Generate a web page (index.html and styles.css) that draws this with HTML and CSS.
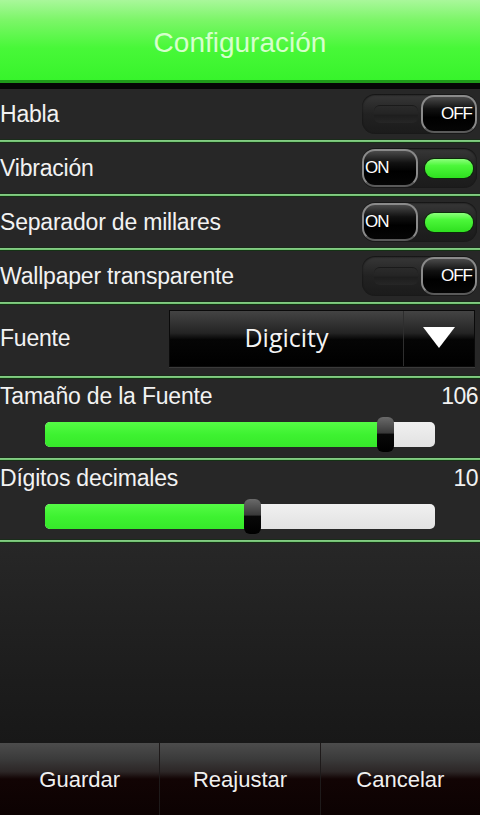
FILE: index.html
```html
<!DOCTYPE html>
<html lang="es">
<head>
<meta charset="utf-8">
<title>Configuración</title>
<link rel="stylesheet" href="styles.css">
</head>
<body>
<div class="app">
  <header class="header">Configuración</header>
  <main class="list">
    <div class="row first">
      <span class="label">Habla</span>
      <div class="toggle off"><span class="slot"></span><span class="knob">OFF</span></div>
    </div>
    <div class="sep"></div>
    <div class="row">
      <span class="label">Vibración</span>
      <div class="toggle on"><span class="knob">ON</span><span class="lamp"></span></div>
    </div>
    <div class="sep"></div>
    <div class="row">
      <span class="label">Separador de millares</span>
      <div class="toggle on"><span class="knob">ON</span><span class="lamp"></span></div>
    </div>
    <div class="sep"></div>
    <div class="row">
      <span class="label">Wallpaper transparente</span>
      <div class="toggle off"><span class="slot"></span><span class="knob">OFF</span></div>
    </div>
    <div class="sep"></div>
    <div class="row font-row">
      <span class="label">Fuente</span>
      <div class="dropdown">
        <span class="dd-value">Digicity</span>
        <span class="dd-arrow"><svg width="32" height="21" viewBox="0 0 32 21"><polygon points="0,0 32,0 16,21" fill="#fff"/></svg></span>
      </div>
    </div>
    <div class="sep"></div>
    <div class="slider-row">
      <div class="slider-head"><span class="label">Tamaño de la Fuente</span><span class="value">106</span></div>
      <div class="track"><div class="fill" style="width:333px"></div><div class="thumb" style="left:332px"></div></div>
    </div>
    <div class="sep"></div>
    <div class="slider-row">
      <div class="slider-head"><span class="label">Dígitos decimales</span><span class="value">10</span></div>
      <div class="track"><div class="fill" style="width:202px"></div><div class="thumb" style="left:199px"></div></div>
    </div>
    <div class="sep"></div>
    <div class="empty"></div>
  </main>
  <footer class="bar">
    <div class="btn">Guardar</div>
    <div class="btn">Reajustar</div>
    <div class="btn">Cancelar</div>
  </footer>
</div>
</body>
</html>
```

FILE: styles.css
```css
* { box-sizing: border-box; }
html, body { margin: 0; padding: 0; }
body {
  width: 480px;
  height: 815px;
  overflow: hidden;
  background: #262626;
  font-family: "Liberation Sans", Arial, sans-serif;
  color: #f2f2f2;
}
.app {
  display: flex;
  flex-direction: column;
  height: 815px;
}
.header {
  height: 83px;
  padding-top: 6px;
  display: flex;
  align-items: center;
  justify-content: center;
  font-size: 28px;
  color: #d6ffcc;
  background: linear-gradient(#a9f79b 0%, #7cf668 25%, #48f838 60%, #37f42b 100%);
  border-bottom: 3px solid #1f9a1a;
}
.list {
  flex: 1;
  display: flex;
  flex-direction: column;
  border-top: 6px solid #060606;
  background: #272727;
}
.row {
  height: 50px;
  display: flex;
  align-items: center;
  justify-content: space-between;
  padding-right: 3px;
}
.label {
  font-size: 23px;
  letter-spacing: -0.2px;
  color: #f2f2f2;
}
.sep {
  height: 4px;
  flex: none;
  background: linear-gradient(#1a2c1a 0, #1a2c1a 1px, #8ccf8c 1px, #6cbf6c 3px, #143214 3px);
}
.toggle {
  width: 115px;
  height: 40px;
  border-radius: 13px;
  display: flex;
  align-items: center;
  background: linear-gradient(#383838, #222 50%, #1b1b1b);
  box-shadow: inset 0 1px 2px rgba(0,0,0,0.8);
}
.toggle.off { justify-content: space-between; padding-left: 12px; }
.slot {
  width: 44px;
  height: 18px;
  border-radius: 6px;
  background: linear-gradient(#2b2b2b, #242424 45%, #1e1e1e 55%, #262626);
  border-top: 1px solid #1a1a1a;
}
.knob {
  width: 56px;
  height: 38px;
  border-radius: 13px;
  border: 2px solid #8a8a8a;
  border-bottom-color: #5a5a5a;
  background: linear-gradient(#4a4a4a 0%, #111 35%, #000 60%, #050505 100%);
  display: flex;
  align-items: center;
  font-size: 17px;
  letter-spacing: -1px;
  color: #fff;
}
.toggle.off .knob { justify-content: flex-end; padding-right: 3px; }
.toggle.on .knob { padding-left: 1px; }
.lamp {
  width: 48px;
  height: 19px;
  margin-left: 7px;
  border-radius: 9px;
  background: linear-gradient(#8cff7c 0%, #4cf73a 35%, #2ee01f 100%);
  box-shadow: 0 0 0 1px #0d2a0a;
}
.font-row {
  height: 70px;
  padding-top: 2px;
  padding-bottom: 6px;
  padding-right: 5px;
}
.dropdown {
  width: 306px;
  height: 57px;
  display: flex;
  border: 1px solid #0a0a0a;
  box-shadow: 0 1px 0 #3a3a3a;
}
.dd-value {
  flex: 1;
  display: flex;
  align-items: center;
  justify-content: center;
  padding-bottom: 3px;
  font-family: "Open Sans", "Noto Sans", sans-serif;
  font-weight: 500;
  font-size: 25px;
  color: #f4f4f4;
  background: linear-gradient(#444 0%, #242424 40%, #050505 52%, #000 100%);
  border-right: 1px solid #2e2e2e;
}
.dd-arrow {
  width: 70px;
  display: flex;
  align-items: center;
  justify-content: center;
  padding-bottom: 2px;
  background: linear-gradient(#444 0%, #242424 40%, #050505 52%, #000 100%);
}
.slider-row {
  height: 78px;
  display: flex;
  flex-direction: column;
}
.slider-head {
  height: 34px;
  display: flex;
  align-items: center;
  justify-content: space-between;
  padding-right: 2px;
}
.value {
  font-size: 23px;
  letter-spacing: -0.5px;
}
.track {
  position: relative;
  margin: 9px 0 0 45px;
  width: 390px;
  height: 25px;
  border-radius: 5px;
  background: linear-gradient(#f0f0f0, #e2e2e2);
}
.fill {
  height: 25px;
  border-radius: 5px 0 0 5px;
  background: linear-gradient(#55fb45, #3ef231 50%, #36e82a);
}
.thumb {
  position: absolute;
  top: -5px;
  width: 17px;
  height: 35px;
  border-radius: 6px;
  background: linear-gradient(#6a6a6a 0%, #3a3a3a 45%, #080808 50%, #000 100%);
}
.empty {
  flex: 1;
  background: linear-gradient(#272727, #1c1c1c 70%, #181818);
}
.bar {
  height: 72px;
  display: flex;
}
.btn {
  flex: 1;
  display: flex;
  align-items: center;
  justify-content: center;
  padding-top: 1px;
  font-size: 22px;
  color: #f0f0f0;
  background: linear-gradient(#4c4c4c 0%, #3b3b3b 22%, #2c2626 40%, #120404 50%, #0c0202 100%);
  border-left: 1px solid #1e1a1a;
}
.btn:first-child { border-left: none; }
```
